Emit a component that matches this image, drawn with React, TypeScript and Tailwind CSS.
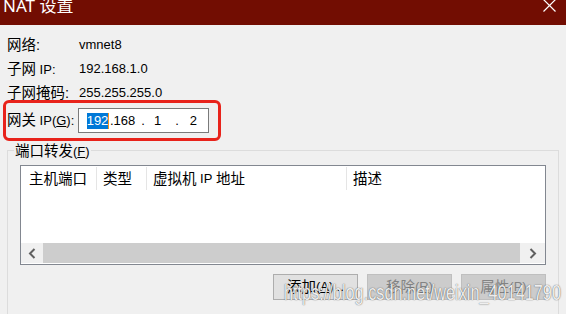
import React from "react";

function Z({ children }: { children: React.ReactNode }) {
  return <span className="text-[14.5px]">{children}</span>;
}

function Row({ label, value }: { label: React.ReactNode; value: string }) {
  return (
    <div className="flex h-[20px] items-center">
      <div className="w-[72px]">{label}</div>
      <div>{value}</div>
    </div>
  );
}

function Chevron({ dir }: { dir: "l" | "r" }) {
  return (
    <svg width="8" height="11" viewBox="0 0 8 11">
      <path
        d={dir === "l" ? "M6.5 1 L2 5.5 L6.5 10" : "M1.5 1 L6 5.5 L1.5 10"}
        stroke="#606060"
        strokeWidth="2"
        fill="none"
      />
    </svg>
  );
}

export default function App() {
  return (
    <div className="relative h-[314px] w-[566px] overflow-hidden bg-[#f0f0f0] font-['Liberation_Sans','Noto_Sans_CJK_SC',sans-serif] text-[13px] leading-[20px] text-black">
      {/* title bar */}
      <div className="flex h-[25px] items-start bg-[#720d02] pl-[3px] pr-[10px] text-white">
        <span className="-mt-[4px] font-['Noto_Sans','Noto_Sans_CJK_SC',sans-serif] text-[17px] leading-[20px]">NAT 设置</span>
        <svg className="ml-auto -mt-[1px]" width="13" height="13" viewBox="0 0 13 13">
          <path d="M0.5 0.5 L12.5 12.5 M12.5 0.5 L0.5 12.5" stroke="white" strokeWidth="1.2" />
        </svg>
      </div>

      {/* info rows */}
      <div className="flex flex-col gap-[4px] pl-[7px] pt-[10px]">
        <Row label={<Z>网络:</Z>} value="vmnet8" />
        <Row label={<><Z>子网</Z> IP:</>} value="192.168.1.0" />
        <Row label={<Z>子网掩码:</Z>} value="255.255.255.0" />
      </div>

      {/* gateway row */}
      <div className="mt-[5px] flex h-[25px] items-center pl-[7px]">
        <div className="w-[71px]">
          <Z>网关</Z> IP(<u>G</u>):
        </div>
        <div className="flex h-[25px] w-[131px] items-center border border-[#7a7a7a] bg-white pl-[8px]">
          <span className="flex h-[16px] w-[22px] items-center justify-center border-r border-[#f7931e] bg-[#0078d7] leading-[16px] text-white">
            192
          </span>
          <span className="ml-[1px]">.168</span>
          <span className="ml-[6px]">.</span>
          <span className="ml-[9px]">1</span>
          <span className="ml-[14px]">.</span>
          <span className="ml-[11px]">2</span>
        </div>
      </div>

      {/* group box */}
      <div className="relative mx-[7px] mt-[17px] h-[200px] border border-[#dcdcdc] px-[12px] pt-[14px]">
        <span className="absolute -top-[10px] left-[6px] bg-[#f0f0f0] px-[1px]">
          <Z>端口转发</Z>(<u>F</u>)
        </span>

        <div className="flex h-[100px] flex-col border border-[#828790] bg-white">
          <div className="flex h-[25px] items-stretch py-[1px]">
            <div className="flex w-[76px] items-center border-r border-[#e5e5e5] pl-[8px]"><Z>主机端口</Z></div>
            <div className="flex w-[50px] items-center border-r border-[#e5e5e5] pl-[6px]"><Z>类型</Z></div>
            <div className="flex w-[200px] items-center border-r border-[#e5e5e5] pl-[6px]"><Z>虚拟机</Z>&nbsp;IP&nbsp;<Z>地址</Z></div>
            <div className="flex flex-1 items-center pl-[6px]"><Z>描述</Z></div>
          </div>
          <div className="flex-1" />
          <div className="mb-[1px] flex h-[20px]">
            <div className="flex w-[22px] items-center justify-center bg-[#f0f0f0]">
              <Chevron dir="l" />
            </div>
            <div className="flex-1 bg-[#cdcdcd]" />
            <div className="flex w-[25px] items-center justify-center bg-[#f0f0f0]">
              <Chevron dir="r" />
            </div>
          </div>
        </div>

        <div className="mt-[9px] flex justify-end gap-[9px]">
          <button className="flex h-[26px] w-[85px] items-center justify-center border border-[#adadad] bg-[#e1e1e1] text-black">
            <Z>添加</Z>(<u>A</u>)...
          </button>
          <button className="flex h-[26px] w-[85px] items-center justify-center border border-[#bfbfbf] bg-[#cccccc] text-[#838383]">
            <Z>移除</Z>(<u>R</u>)
          </button>
          <button className="flex h-[26px] w-[85px] items-center justify-center border border-[#bfbfbf] bg-[#cccccc] text-[#838383]">
            <Z>属性</Z>(<u>P</u>)
          </button>
        </div>
      </div>

      {/* annotation box */}
      <div className="absolute left-[3px] top-[100px] h-[41px] w-[218px] rounded-[6px] border-[3px] border-[#e8231b]" />

      {/* watermark */}
      <div className="pointer-events-none absolute left-[284px] top-[280px] origin-left scale-x-[0.74] whitespace-nowrap font-['Liberation_Sans',sans-serif] text-[22px] leading-[26px] text-white/90 [text-shadow:0_0_1px_rgba(0,0,0,0.6),0_0_2px_rgba(0,0,0,0.25)]">
        https://blog.csdn.net/weixin_40141790
      </div>
    </div>
  );
}
